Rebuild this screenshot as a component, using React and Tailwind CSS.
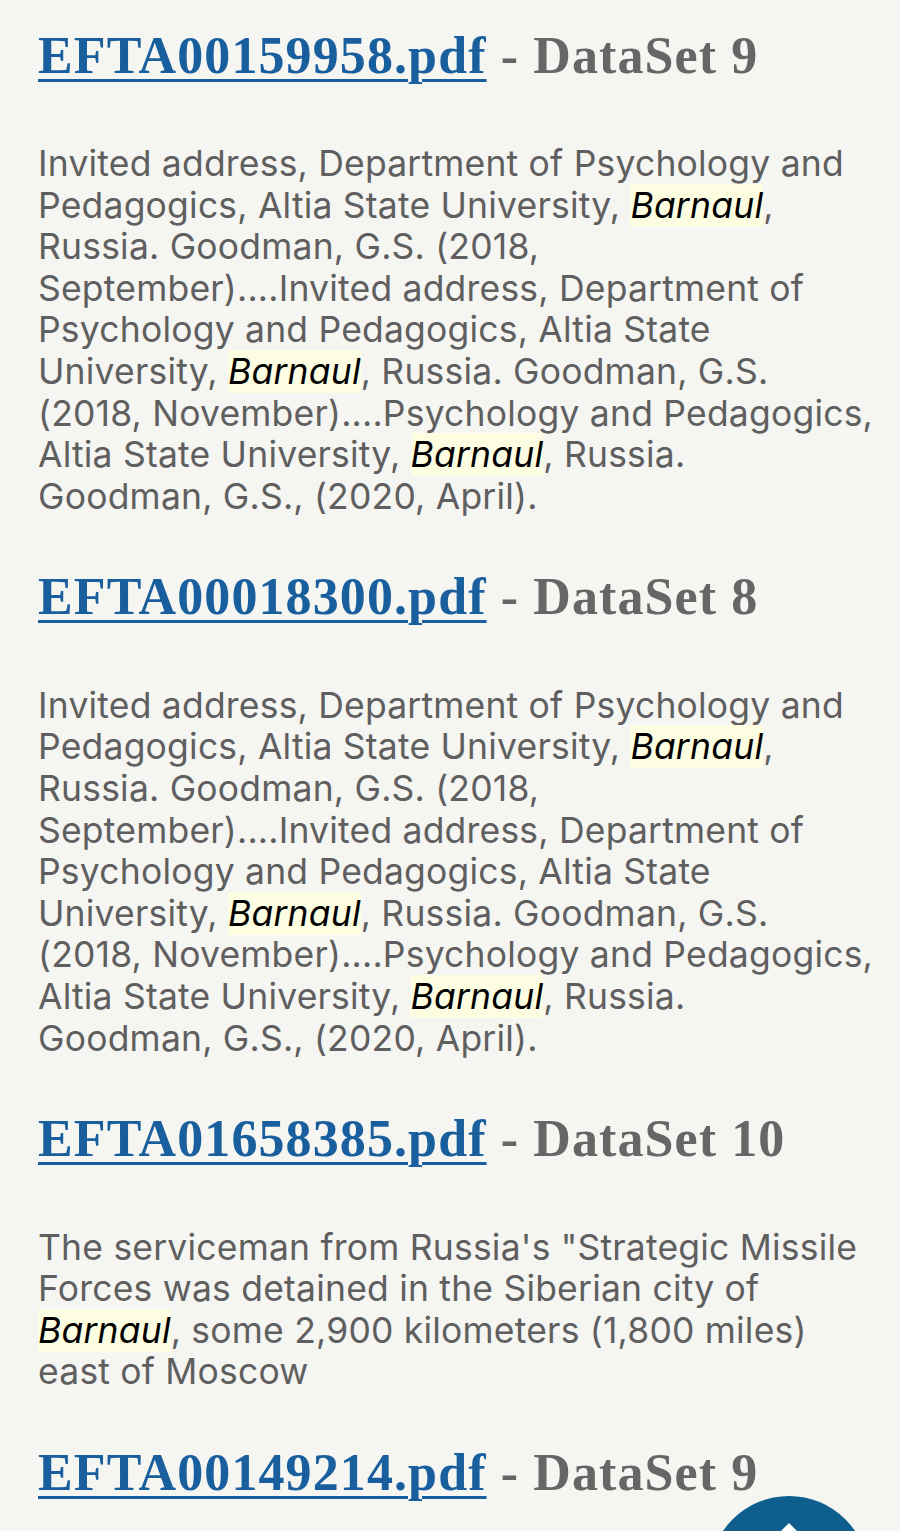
import React from "react";

const H = ({ children }) => (
  <mark className="bg-[#fdfde1] text-black italic">{children}</mark>
);

const Lines = ({ lines }) =>
  lines.map((l, i) => (
    <React.Fragment key={i}>
      {l}
      {i < lines.length - 1 && <br />}
    </React.Fragment>
  ));

const body1 = [
  <>Invited address, Department of Psychology and</>,
  <>Pedagogics, Altia State University, <H>Barnaul</H>,</>,
  <>Russia. Goodman, G.S. (2018,</>,
  <>September)....Invited address, Department of</>,
  <>Psychology and Pedagogics, Altia State</>,
  <>University, <H>Barnaul</H>, Russia. Goodman, G.S.</>,
  <>(2018, November)....Psychology and Pedagogics,</>,
  <>Altia State University, <H>Barnaul</H>, Russia.</>,
  <>Goodman, G.S., (2020, April).</>,
];

const results = [
  { file: "EFTA00159958.pdf", ds: "DataSet 9", body: body1 },
  { file: "EFTA00018300.pdf", ds: "DataSet 8", body: body1 },
  {
    file: "EFTA01658385.pdf",
    ds: "DataSet 10",
    body: [
      <>The serviceman from Russia's "Strategic Missile</>,
      <>Forces was detained in the Siberian city of</>,
      <><H>Barnaul</H>, some 2,900 kilometers (1,800 miles)</>,
      <>east of Moscow</>,
    ],
  },
  { file: "EFTA00149214.pdf", ds: "DataSet 9", body: null },
];

export default function App() {
  return (
    <div className="min-h-[1531px] bg-[#f5f5f2] overflow-hidden">
      <div className="pl-[38px] pr-[20px] pt-[24.5px]">
        {results.map((r, i) => (
          <section key={i}>
            <h2
              className="text-[52px] leading-[62px] font-bold text-[#666666] mb-[56.5px] whitespace-nowrap tracking-[1.1px]"
              style={{ fontFamily: '"Liberation Serif", serif' }}
            >
              <a
                href="#"
                className="text-[#1a5f9d] underline decoration-[3px] underline-offset-[6px]"
              >
                {r.file}
              </a>{" "}
              - {r.ds}
            </h2>
            {r.body && (
              <p
                className="text-[35.5px] leading-[41.6px] text-[#5f5f5f] mb-[49px] whitespace-nowrap tracking-[0.2px]"
                style={{ fontFamily: 'Inter, "Noto Sans", sans-serif' }}
              >
                <Lines lines={r.body} />
              </p>
            )}
          </section>
        ))}
      </div>
      <button
        aria-label="Back to top"
        className="fixed right-[31px] bottom-[-125px] w-[160px] h-[160px] rounded-full bg-[#0f5f8e] flex justify-center"
      >
        <svg width="44" height="30" viewBox="0 0 44 30" className="mt-[27px]">
          <path d="M22 0 L44 22 L36 30 L22 16 L8 30 L0 22 Z" fill="#ffffff" />
        </svg>
      </button>
    </div>
  );
}
